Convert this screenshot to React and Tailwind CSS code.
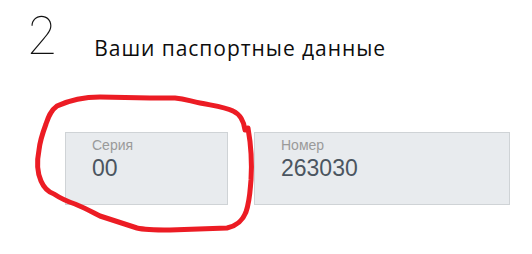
export default function App() {
  return (
    <div className="relative w-[532px] h-[254px] bg-white overflow-hidden">
      {/* Step header */}
      <div className="flex items-start pt-[6px] pl-[26px]">
        <span className="font-['Inter',sans-serif] font-thin text-[52px] leading-[60px] text-[#111]">2</span>
        <h2 className="ml-[36px] mt-[28px] font-['Open_Sans',sans-serif] text-[21px] leading-[28px] tracking-[0.95px] text-[#0d0d0d]">
          Ваши паспортные данные
        </h2>
      </div>

      {/* Fields */}
      <div className="flex gap-[26px] pl-[65px] mt-[66px]">
        <div className="w-[163px] h-[73px] bg-[#e8ebee] border border-[#cfd3d6] pl-[26px] pt-[4px] font-['Liberation_Sans',Arial,sans-serif]">
          <div className="text-[14px] leading-[16px] text-[#9a9a9a]">Серия</div>
          <div className="mt-[2px] text-[23px] leading-[26px] text-[#4b5560]">00</div>
        </div>
        <div className="w-[256px] h-[73px] bg-[#e8ebee] border border-[#cfd3d6] pl-[26px] pt-[4px] font-['Liberation_Sans',Arial,sans-serif]">
          <div className="text-[14px] leading-[16px] text-[#9a9a9a]">Номер</div>
          <div className="mt-[2px] text-[23px] leading-[26px] text-[#4b5560]">263030</div>
        </div>
      </div>

      {/* Hand-drawn annotation */}
      <svg className="absolute inset-0 pointer-events-none" width="532" height="254" viewBox="0 0 532 254">
        <path
          d="M245 130 C244 122 240 114 233 111 C225 107 215 106 200 103 C190 101 185 99 175 98 L150 98 L100 97 C85 97 70 100 57 106 C50 111 48 118 46 124 C43 132 40 140 39 150 C37 160 37 172 41 181 C44 188 48 192 54 194 C60 198 66 201 75 204 C85 208 92 212 100 216 C112 220 125 224 137 228 C145 230 155 230 170 230 L227 228 C236 226 242 222 246 212 C250 200 250 190 251 180 C252 165 251 145 248 128"
          fill="none"
          stroke="#ec1c24"
          strokeWidth="5"
          strokeLinecap="round"
          strokeLinejoin="round"
        />
      </svg>
    </div>
  )
}
